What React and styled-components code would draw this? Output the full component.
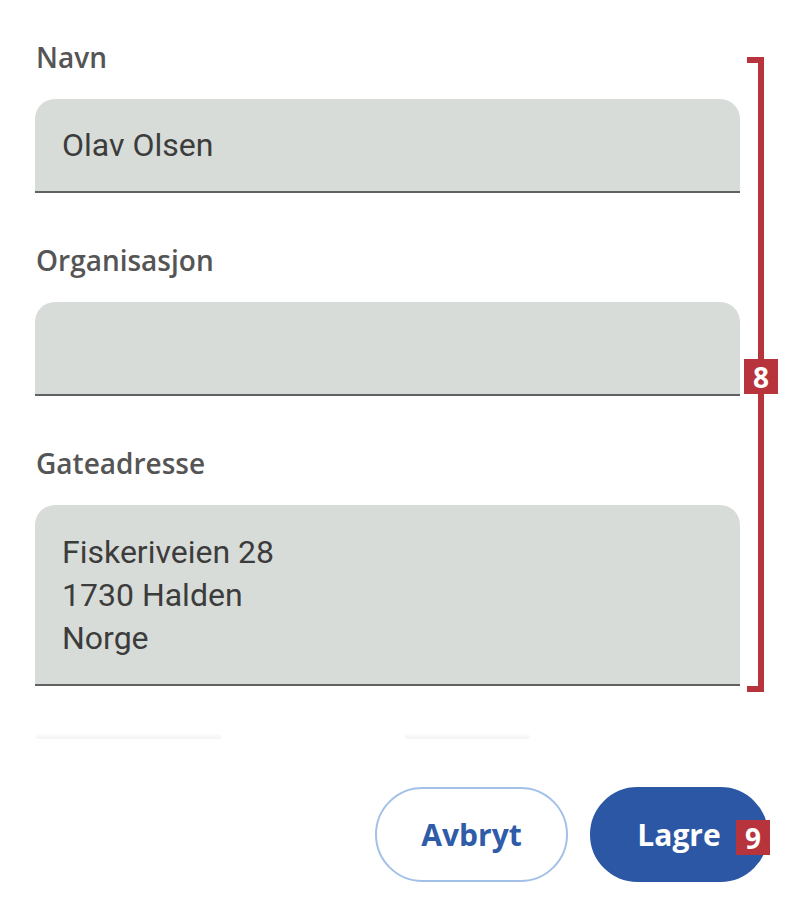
import React from 'react';
import styled, { createGlobalStyle } from 'styled-components';

const GlobalStyle = createGlobalStyle`
  html, body {
    margin: 0;
    padding: 0;
    background: #fff;
  }
  body {
    font-family: "Open Sans", "Liberation Sans", sans-serif;
  }
`;

const Page = styled.div`
  position: relative;
  width: 802px;
  height: 914px;
  overflow: hidden;
  background: #fff;
`;

const Form = styled.div`
  display: flex;
  flex-direction: column;
  gap: 50px;
  padding: 40px 62px 0 35px;
`;

const Group = styled.div`
  display: flex;
  flex-direction: column;
  gap: 25px;
`;

const Label = styled.div`
  font-family: "Open Sans", "Liberation Sans", sans-serif;
  font-weight: 600;
  font-size: 28px;
  line-height: 34px;
  color: #555;
  padding-left: 1px;
`;

const Field = styled.div`
  box-sizing: border-box;
  min-height: ${({ $tall }) => ($tall ? '181px' : '94px')};
  padding: ${({ $tall }) => ($tall ? '26px 27px 22px' : '0 27px')};
  display: flex;
  flex-direction: column;
  justify-content: ${({ $tall }) => ($tall ? 'flex-start' : 'center')};
  background: #d8dcd8;
  border-radius: 20px 20px 0 0;
  border-bottom: 2px solid #5f6260;
  font-family: Roboto, "Liberation Sans", sans-serif;
  font-size: 32px;
  line-height: 43px;
  color: #3c3c3c;
`;

const Faded = styled.div`
  display: flex;
  gap: 183px;
  padding-left: 1px;
  margin-top: -2px;
`;

const FadedBar = styled.div`
  width: ${({ $w }) => $w}px;
  height: 5px;
  border-radius: 2px;
  background: linear-gradient(to bottom, #fcfcfc, #f4f4f4);
`;

const Footer = styled.div`
  display: flex;
  justify-content: flex-end;
  gap: 22px;
  padding: 48px 34px 0 0;
`;

const Button = styled.button`
  box-sizing: border-box;
  height: 95px;
  width: ${({ $primary }) => ($primary ? '178px' : '193px')};
  border-radius: 48px;
  border: 2px solid ${({ $primary }) => ($primary ? '#2c57a5' : '#a3c1e8')};
  background: ${({ $primary }) => ($primary ? '#2c57a5' : '#fff')};
  color: ${({ $primary }) => ($primary ? '#fff' : '#2f5ca8')};
  font-family: "Open Sans", "Liberation Sans", sans-serif;
  font-weight: 700;
  font-size: 30px;
  padding: 0;
  cursor: pointer;
`;

const BracketLine = styled.div`
  position: absolute;
  left: 758px;
  top: 57px;
  width: 6px;
  height: 635px;
  background: #b8343c;

  &::before,
  &::after {
    content: '';
    position: absolute;
    right: 0;
    width: 17px;
    height: 6px;
    background: #b8343c;
  }
  &::before {
    top: 0;
  }
  &::after {
    bottom: 0;
  }
`;

const Badge = styled.div`
  position: absolute;
  left: ${({ $x }) => $x}px;
  top: ${({ $y }) => $y}px;
  width: 34px;
  height: 35px;
  display: flex;
  align-items: center;
  justify-content: center;
  background: #b8343c;
  color: #fff;
  font-family: "Open Sans", "Liberation Sans", sans-serif;
  font-weight: 700;
  font-size: 28px;
  line-height: 1;
`;

export default function App() {
  return (
    <Page>
      <GlobalStyle />
      <Form>
        <Group>
          <Label>Navn</Label>
          <Field>Olav Olsen</Field>
        </Group>
        <Group>
          <Label>Organisasjon</Label>
          <Field />
        </Group>
        <Group>
          <Label>Gateadresse</Label>
          <Field $tall>
            <div>Fiskeriveien 28</div>
            <div>1730 Halden</div>
            <div>Norge</div>
          </Field>
        </Group>
        <Faded>
          <FadedBar $w={186} />
          <FadedBar $w={125} />
        </Faded>
      </Form>
      <Footer>
        <Button>Avbryt</Button>
        <Button $primary>Lagre</Button>
      </Footer>
      <BracketLine />
      <Badge $x={744} $y={359}>8</Badge>
      <Badge $x={736} $y={820}>9</Badge>
    </Page>
  );
}
